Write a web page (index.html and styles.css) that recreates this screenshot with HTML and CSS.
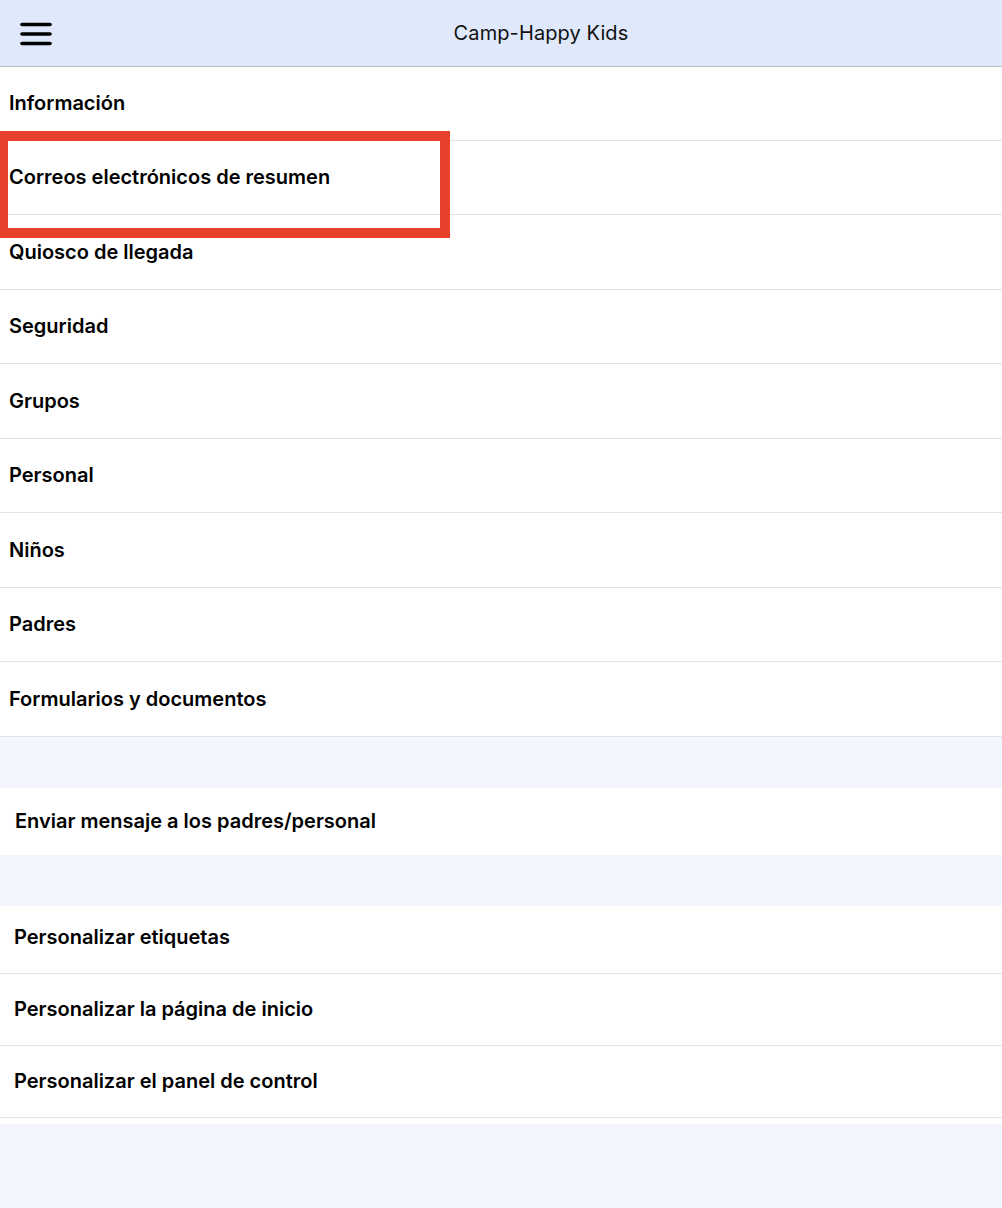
FILE: index.html
```html
<!DOCTYPE html>
<html lang="es">
<head>
<meta charset="utf-8">
<title>Camp-Happy Kids</title>
<link rel="stylesheet" href="styles.css">
</head>
<body>
<header class="topbar">
  <button class="menu-btn" aria-label="Menú">
    <svg width="34" height="26" viewBox="0 0 34 26">
      <g stroke="#000" stroke-width="3.6" stroke-linecap="round">
        <line x1="3" y1="3.5" x2="31" y2="3.5"/>
        <line x1="3" y1="13" x2="31" y2="13"/>
        <line x1="3" y1="22.5" x2="31" y2="22.5"/>
      </g>
    </svg>
  </button>
  <h1 class="title">Camp-Happy Kids</h1>
</header>
<main class="content">
  <ul class="list primary">
    <li class="row">Información</li>
    <li class="row highlighted">Correos electrónicos de resumen<span class="mark"></span></li>
    <li class="row">Quiosco de llegada</li>
    <li class="row">Seguridad</li>
    <li class="row">Grupos</li>
    <li class="row">Personal</li>
    <li class="row">Niños</li>
    <li class="row">Padres</li>
    <li class="row">Formularios y documentos</li>
  </ul>
  <div class="band"></div>
  <div class="single">Enviar mensaje a los padres/personal</div>
  <div class="band"></div>
  <ul class="list secondary">
    <li class="row2 first">Personalizar etiquetas</li>
    <li class="row2">Personalizar la página de inicio</li>
    <li class="row2">Personalizar el panel de control</li>
  </ul>
</main>
</body>
</html>
```
FILE: styles.css
```css
* { box-sizing: border-box; }
html, body { margin: 0; padding: 0; }
body {
  background: #f3f6fd;
  font-family: Inter, "Liberation Sans", Arial, sans-serif;
  color: #000;
  min-height: 100vh;
  overflow: hidden;
}
.topbar {
  height: 67px;
  background: #e0e9fb;
  border-bottom: 1px solid #b9babe;
  display: flex;
  align-items: center;
  position: relative;
}
.menu-btn {
  background: none;
  border: 0;
  padding: 0;
  margin-left: 19px;
  width: 34px;
  height: 26px;
  margin-top: 1px;
  display: flex;
}
.title {
  margin: 0;
  flex: 1;
  text-align: center;
  padding-left: 27px;
  font-size: 20px;
  font-weight: 400;
  letter-spacing: 0.1px;
  color: #111;
}
.list {
  list-style: none;
  margin: 0;
  padding: 0;
  background: #fff;
}
.row {
  height: 74.5px;
  border-bottom: 1px solid #e2e2e4;
  display: flex;
  align-items: center;
  padding-left: 9px;
  font-size: 20px;
  font-weight: 600;
  position: relative;
}
.row:first-child { height: 73.5px; }
.mark {
  position: absolute;
  top: -10px;
  left: -2px;
  width: 452px;
  height: 107px;
  border: 10px solid #e8402a;
  pointer-events: none;
}
.band { height: 51px; background: #f3f6fd; }
.single {
  height: 67px;
  background: #fff;
  display: flex;
  align-items: center;
  padding-left: 15px;
  font-size: 20px;
  font-weight: 600;
}
.secondary { padding-bottom: 6px; }
.row2 {
  height: 72px;
  border-bottom: 1px solid #e2e2e4;
  display: flex;
  align-items: center;
  padding-left: 14px;
  font-size: 20px;
  font-weight: 600;
}
.row2.first { height: 68px; padding-bottom: 4px; }
```
